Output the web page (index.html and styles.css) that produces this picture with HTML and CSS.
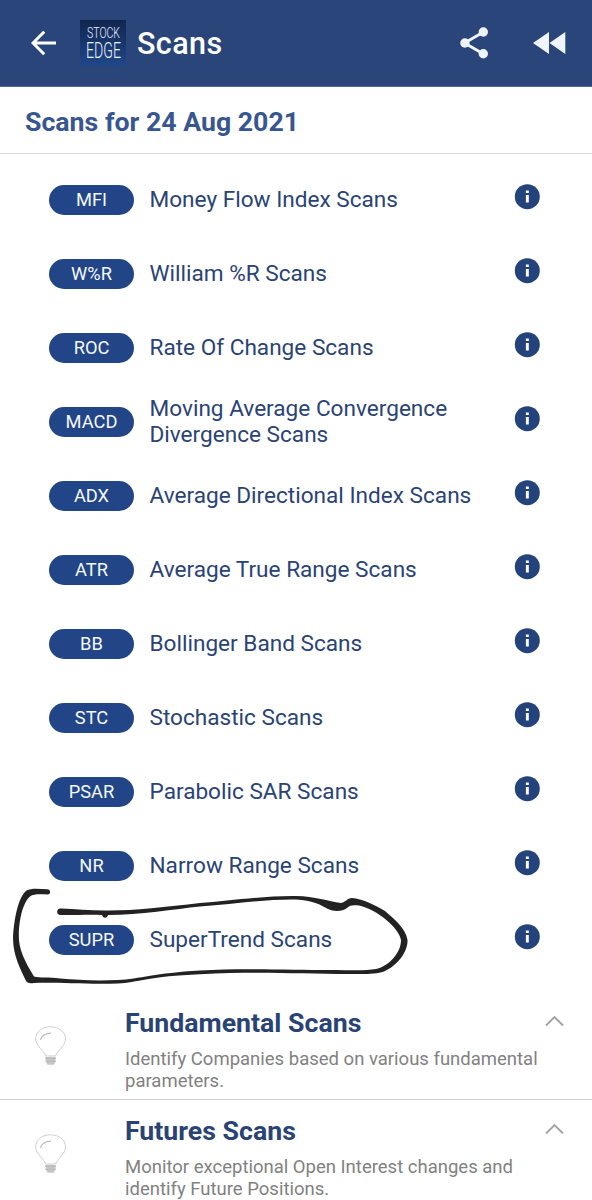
FILE: index.html
```html
<!DOCTYPE html>
<html lang="en">
<head>
<meta charset="utf-8">
<title>Scans</title>
<link rel="stylesheet" href="styles.css">
</head>
<body>
<svg class="defs" width="0" height="0" aria-hidden="true">
  <symbol id="info" viewBox="0 0 26 26">
    <circle cx="13.300" cy="12.700" r="12.500" fill="#25437b"/>
    <path d="M11.900 6.400h2.900v2.700h-2.900zM11.900 11.100h2.900v7.500h-2.900z" fill="#fff"/>
  </symbol>
  <symbol id="bulb" viewBox="0 0 32 40">
    <path d="M10.500 30C9.500 25 .7 20 .7 13C.7 5.500 7.500 .8 15.500 .8S30.500 5.500 30.500 13C30.500 20 22 25 20.500 30z" fill="none" stroke="#c9c9c9" stroke-width="0.900"/>
    <path d="M5.500 14C6 10.500 10 7.200 16 7.200" fill="none" stroke="#bdbdbd" stroke-width="1.300"/>
    <path d="M10.500 31h10.300l-.5 4.500-1.300 3.300h-6.500l-1.500-3.300z" fill="#c6c6c6"/>
    <path d="M10.300 32.300h10.600M10.300 35.300h10.600" stroke="#bcbcbc" stroke-width="1.200"/>
  </symbol>
  <symbol id="chevron" viewBox="0 0 20 12">
    <path d="M1 10.500L9.500 2l8.500 8.500" fill="none" stroke="#a3a3a3" stroke-width="1.900"/>
  </symbol>
</svg>
<header class="bar">
  <svg class="back" viewBox="0 0 26 26"><path d="M25 13H2.500M13.200 1.800L2 13l11.200 11.200" fill="none" stroke="#fff" stroke-width="3"/></svg>
  <svg class="logo" viewBox="0 0 46 46">
    <defs><linearGradient id="navy" x1="0" y1="0" x2="0" y2="1"><stop offset="0" stop-color="#10264e"/><stop offset="1" stop-color="#20478b"/></linearGradient></defs>
    <rect width="46" height="46" fill="url(#navy)"/>
    <text class="logo-text" x="7" y="18" font-size="15.500" textLength="33" lengthAdjust="spacingAndGlyphs">STOCK</text>
    <text class="logo-text" x="6" y="38" font-size="22" textLength="35" lengthAdjust="spacingAndGlyphs">EDGE</text>
  </svg>
  <h1 class="bar-title">Scans</h1>
  <svg class="share" viewBox="0 0 28 32"><path d="M23.500 5L4.500 16l19 11" fill="none" stroke="#f0f5fd" stroke-width="2.800"/><circle cx="23.300" cy="5" r="4.700" fill="#f0f5fd"/><circle cx="4.900" cy="16" r="4.700" fill="#f0f5fd"/><circle cx="23.300" cy="26.700" r="4.700" fill="#f0f5fd"/></svg>
  <svg class="rewind" viewBox="0 0 33 22"><path d="M0 11L16 0v22zM16.500 11L32.300 0v22z" fill="#f0f5fd"/></svg>
</header>
<h2 class="date">Scans for 24 Aug 2021</h2>
<main>
  <ul class="scans">
    <li class="scan"><span class="pill">MFI</span><span class="name">Money Flow Index Scans</span><svg class="info"><use href="#info"/></svg></li>
    <li class="scan"><span class="pill">W%R</span><span class="name">William %R Scans</span><svg class="info"><use href="#info"/></svg></li>
    <li class="scan"><span class="pill">ROC</span><span class="name">Rate Of Change Scans</span><svg class="info"><use href="#info"/></svg></li>
    <li class="scan"><span class="pill">MACD</span><span class="name">Moving Average Convergence Divergence Scans</span><svg class="info"><use href="#info"/></svg></li>
    <li class="scan"><span class="pill">ADX</span><span class="name">Average Directional Index Scans</span><svg class="info"><use href="#info"/></svg></li>
    <li class="scan"><span class="pill">ATR</span><span class="name">Average True Range Scans</span><svg class="info"><use href="#info"/></svg></li>
    <li class="scan"><span class="pill">BB</span><span class="name">Bollinger Band Scans</span><svg class="info"><use href="#info"/></svg></li>
    <li class="scan"><span class="pill">STC</span><span class="name">Stochastic Scans</span><svg class="info"><use href="#info"/></svg></li>
    <li class="scan"><span class="pill">PSAR</span><span class="name">Parabolic SAR Scans</span><svg class="info"><use href="#info"/></svg></li>
    <li class="scan"><span class="pill">NR</span><span class="name">Narrow Range Scans</span><svg class="info"><use href="#info"/></svg></li>
    <li class="scan marked"><span class="pill">SUPR</span><span class="name">SuperTrend Scans</span><svg class="info"><use href="#info"/></svg>
      <svg class="scribble" viewBox="0 880 420 110" aria-hidden="true">
        <path fill="#222" d="M47 889.200C40 889 32 887.500 26.500 890.500C18 897 14 920 13 938C13 956 21 970 25.500 980C27 983.500 30 983.500 34 983C55 982 85 984.500 118 983.500C137 982.500 150 976 200 974.200C260 971 300 974 350 974C365 974 376 974.500 384 971.500C397 966 408 952 407.500 940C406 928 392 917 385 911C375 905 362 898.500 352 898C347 898 346 902 341 903C328 901 315 896.500 296 896C265 895.500 228 901 200 903C165 907 130 911 105 910.500C90 910.500 75 909 61 908.500A3 3 0 0 0 60 915C75 915.500 87 914 102 915C103 918.500 107 918.500 108 915C140 915 175 909 200 906.500C235 904 265 899 296 899.500C312 900 321 905 328 909C334 912 343 911.500 347 908C350 905 353 905 359 905.500C378 910 399 928 401 940C401 954 387 967 376 969C365 971 350 970 330 970C290 970 240 968 200 970.500C155 973 140 979 118 980C95 981 78 980 60 978.500C49 977 40 978 34 976.500C29 968 20 954 19 940C18 925 22 903 30 896.500C34 893.500 41 894.500 48 894.500A2.700 2.700 0 0 0 47 889.200z"/>
      </svg>
    </li>
  </ul>
  <section class="group">
    <svg class="bulb"><use href="#bulb"/></svg>
    <div class="group-body"><h3 class="group-title">Fundamental Scans</h3><p class="group-text">Identify Companies based on various fundamental parameters.</p></div>
    <svg class="chevron"><use href="#chevron"/></svg>
  </section>
  <section class="group">
    <svg class="bulb"><use href="#bulb"/></svg>
    <div class="group-body"><h3 class="group-title">Futures Scans</h3><p class="group-text">Monitor exceptional Open Interest changes and identify Future Positions.</p></div>
    <svg class="chevron"><use href="#chevron"/></svg>
  </section>
</main>
</body>
</html>
```
FILE: styles.css
```css
* { box-sizing: border-box; margin: 0; padding: 0; }
html { height: 100%; overflow: hidden; }
body { height: 1200px; overflow: hidden; background: #fff; font-family: Roboto, sans-serif; color: #2a4375; }
.defs { display: block; }
svg { display: block; flex: none; }
.bar { display: flex; align-items: center; height: 87px; padding-left: 31px; background: #29457a; border-bottom: 1px solid #4d6795; }
.back { width: 26px; height: 26px; }
.logo { width: 46px; height: 46px; margin-left: 23px; overflow: visible; }
.logo-text { font-family: Roboto, sans-serif; font-weight: 300; fill: #e9f2ff; }
.bar-title { flex: 1; margin-left: 11px; padding-top: 2px; font-size: 30.5px; line-height: 36px; font-weight: 500; letter-spacing: 0.4px; color: #fff; }
.share { width: 28px; height: 32px; margin-right: 45px; }
.rewind { width: 33px; height: 22px; margin-right: 26px; }
.date { height: 67px; padding: 17px 0 0 25px; border-bottom: 1px solid #d9d9d9; font-size: 26.7px; line-height: 37px; font-weight: 700; color: #38568f; }
.scans { list-style: none; padding-top: 9px; }
.scan { display: flex; align-items: center; height: 74px; padding: 0 52px 0 49px; }
.pill { width: 85px; height: 30px; border-radius: 15px; background: #224587; color: #f4f8ff; font-size: 18.3px; line-height: 29px; text-align: center; }
.name { flex: 1; margin-left: 15.5px; padding: 0 30px 1px 0; font-size: 22.6px; line-height: 26px; }
.info { width: 26px; height: 26px; margin-top: -6px; }
.marked { position: relative; }
.scribble { position: absolute; left: 0; top: -23px; width: 420px; height: 110px; }
.group { display: flex; align-items: flex-start; height: 108px; padding: 0 27px 0 35px; border-bottom: 1px solid #d0d0d0; }
.scans + .group { margin-top: 15px; }
.bulb { width: 32px; height: 40px; margin-top: 34px; }
.group-body { flex: 1; padding: 16px 0 0 58px; }
.group-title { font-size: 26.7px; line-height: 30px; font-weight: 700; white-space: nowrap; }
.group-text { margin: 10px -20px 0 0; font-size: 18.5px; line-height: 22px; color: #818181; }
.chevron { width: 20px; height: 12px; margin-top: 23px; }
```
